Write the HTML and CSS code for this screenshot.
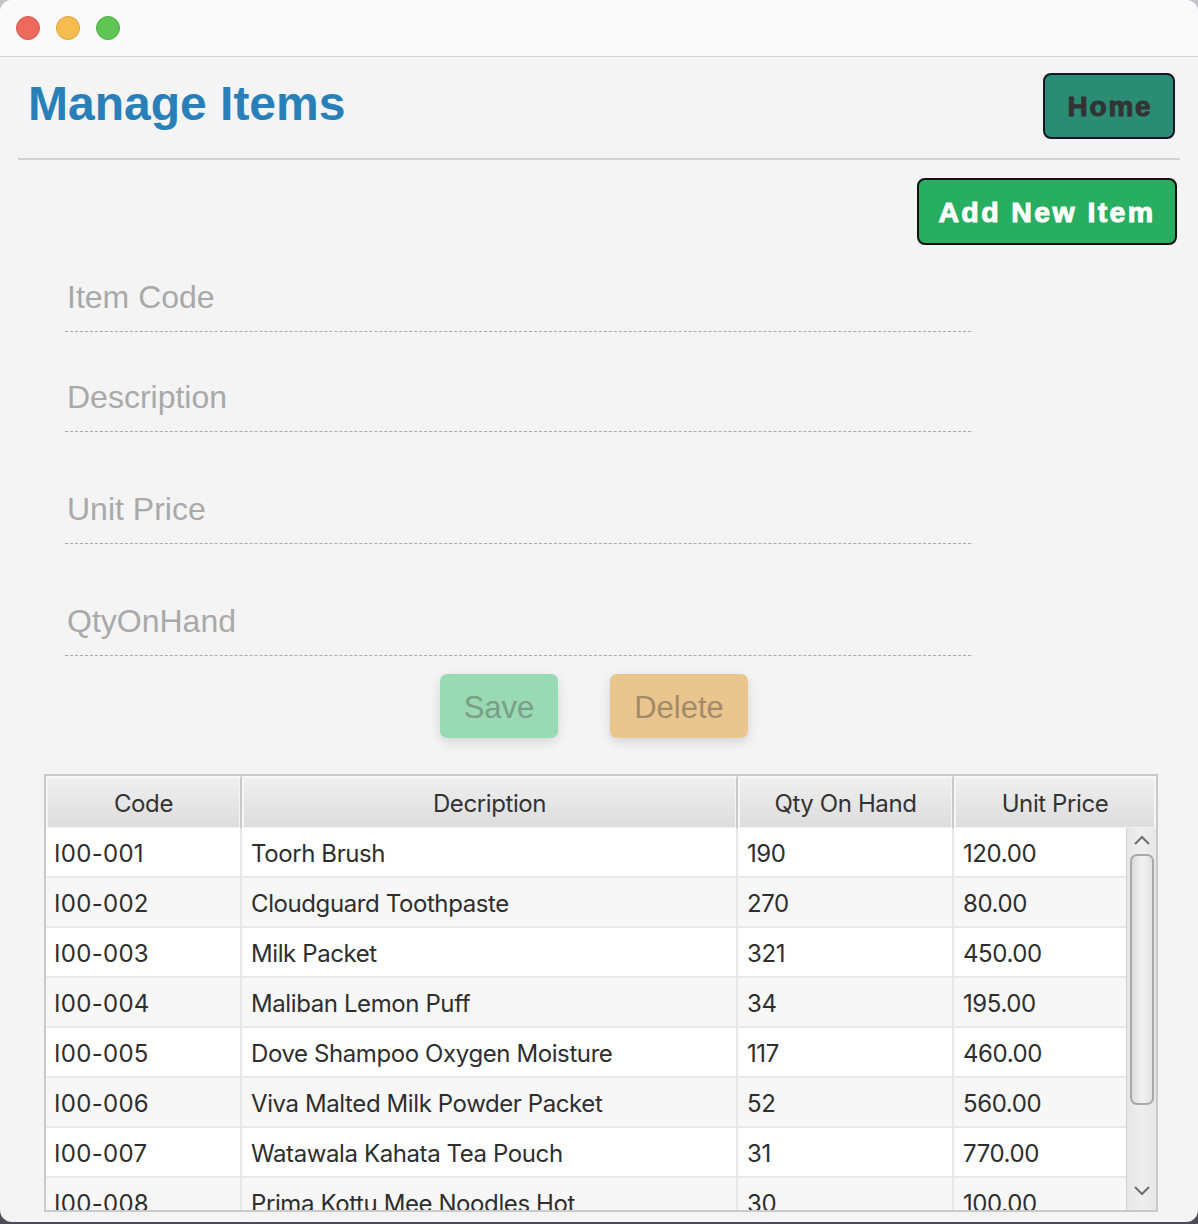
FILE: index.html
```html
<!DOCTYPE html>
<html>
<head>
<meta charset="utf-8">
<link rel="stylesheet" href="styles.css">
</head>
<body>
<div class="window">
  <div class="titlebar">
    <span class="light red"></span>
    <span class="light yellow"></span>
    <span class="light green"></span>
  </div>
  <div class="header">
    <h1 class="title">Manage Items</h1>
    <button class="btn-home">Home</button>
  </div>
  <div class="separator"></div>
  <div class="add-row">
    <button class="btn-add">Add New Item</button>
  </div>
  <div class="form">
    <div class="field f1">Item Code</div>
    <div class="field f2">Description</div>
    <div class="field f3">Unit Price</div>
    <div class="field f4">QtyOnHand</div>
  </div>
  <div class="actions">
    <button class="btn-save">Save</button>
    <button class="btn-delete">Delete</button>
  </div>
  <div class="table">
    <div class="thead">
      <div class="th">Code</div>
      <div class="th">Decription</div>
      <div class="th">Qty On Hand</div>
      <div class="th">Unit Price</div>
    </div>
    <div class="tbody">
      <div class="rows">
        <div class="tr"><div class="td">I00-001</div><div class="td">Toorh Brush</div><div class="td">190</div><div class="td">120.00</div></div>
        <div class="tr"><div class="td">I00-002</div><div class="td">Cloudguard Toothpaste</div><div class="td">270</div><div class="td">80.00</div></div>
        <div class="tr"><div class="td">I00-003</div><div class="td">Milk Packet</div><div class="td">321</div><div class="td">450.00</div></div>
        <div class="tr"><div class="td">I00-004</div><div class="td">Maliban Lemon Puff</div><div class="td">34</div><div class="td">195.00</div></div>
        <div class="tr"><div class="td">I00-005</div><div class="td">Dove Shampoo Oxygen Moisture</div><div class="td">117</div><div class="td">460.00</div></div>
        <div class="tr"><div class="td">I00-006</div><div class="td">Viva Malted Milk Powder Packet</div><div class="td">52</div><div class="td">560.00</div></div>
        <div class="tr"><div class="td">I00-007</div><div class="td">Watawala Kahata Tea Pouch</div><div class="td">31</div><div class="td">770.00</div></div>
        <div class="tr"><div class="td">I00-008</div><div class="td">Prima Kottu Mee Noodles Hot</div><div class="td">30</div><div class="td">100.00</div></div>
      </div>
      <div class="vscroll">
        <svg class="arrow" width="20" height="12" viewBox="0 0 20 12"><path d="M3 10 L10 3 L17 10" fill="none" stroke="#6f6f6f" stroke-width="2"/></svg>
        <div class="thumb"></div>
        <div class="track-gap"></div>
        <svg class="arrow" width="20" height="12" viewBox="0 0 20 12"><path d="M3 2 L10 9 L17 2" fill="none" stroke="#6f6f6f" stroke-width="2"/></svg>
      </div>
    </div>
  </div>
</div>
</body>
</html>
```

FILE: styles.css
```css
* { box-sizing: border-box; }
html, body { margin: 0; padding: 0; }
body {
  width: 1198px;
  height: 1224px;
  background: linear-gradient(#c4c4c8, #4e4a56);
  overflow: hidden;
}
.window {
  width: 1198px;
  height: 1222px;
  background: #f4f4f4;
  border-radius: 12px;
  overflow: hidden;
  display: flex;
  flex-direction: column;
  font-family: "Liberation Sans", Arial, sans-serif;
}
.titlebar {
  height: 57px;
  flex: none;
  background: #fafafa;
  border-bottom: 1px solid #d3d3d3;
  display: flex;
  align-items: center;
  padding-left: 16px;
  gap: 16px;
}
.light {
  width: 24px;
  height: 24px;
  border-radius: 50%;
  display: block;
}
.red { background: #ee6a5f; border: 1px solid #d8574d; }
.yellow { background: #f5bd4f; border: 1px solid #dca23a; }
.green { background: #61c554; border: 1px solid #4caf40; }

.header {
  display: flex;
  justify-content: space-between;
  align-items: flex-start;
  padding: 16px 23px 19px 28px;
  flex: none;
}
.title {
  margin: 3px 0 0 0;
  font-size: 48px;
  line-height: 56px;
  font-weight: bold;
  color: #2980b9;
}
.btn-home {
  width: 132px;
  height: 66px;
  background: #2a8c73;
  border: 2px solid #15152a;
  border-radius: 8px;
  font-family: "Liberation Sans", Arial, sans-serif;
  font-weight: bold;
  font-size: 28px;
  letter-spacing: 1.8px;
  -webkit-text-stroke: 1px #333;
  color: #333;
  padding: 2px 0 0 2px;
}
.separator {
  height: 2px;
  margin: 0 18px;
  background: #d2d2d2;
  flex: none;
}
.add-row {
  display: flex;
  justify-content: flex-end;
  padding: 18px 21px 0 0;
  flex: none;
}
.btn-add {
  width: 260px;
  height: 67px;
  background: #27ae60;
  border: 2px solid #111;
  border-radius: 8px;
  font-family: "Liberation Sans", Arial, sans-serif;
  font-weight: bold;
  font-size: 28.5px;
  letter-spacing: 2.4px;
  -webkit-text-stroke: 1px #fff;
  color: #fff;
  padding: 2px 0 0 0;
}
.form {
  display: flex;
  flex-direction: column;
  padding-left: 65px;
  flex: none;
}
.field {
  width: 906px;
  font-size: 32px;
  line-height: 36px;
  color: #a9a9a9;
  padding: 0 0 16px 2px;
  border-bottom: 1px dashed #a9a9a9;
}
.f1 { margin-top: 34px; }
.f2 { margin-top: 47px; }
.f3 { margin-top: 59px; }
.f4 { margin-top: 59px; }

.actions {
  display: flex;
  gap: 52px;
  padding: 18px 0 0 440px;
  flex: none;
}
.actions button {
  height: 64px;
  border: none;
  border-radius: 7px;
  font-family: "Liberation Sans", Arial, sans-serif;
  font-size: 31px;
  padding: 4px 0 0 0;
  box-shadow: 0 4px 12px rgba(0,0,0,0.13);
}
.btn-save {
  width: 118px;
  background: #99d9b4;
  color: #79a087;
}
.btn-delete {
  width: 138px;
  background: #eac68f;
  color: #a28b6a;
}

.table {
  margin: 36px 0 0 44px;
  width: 1114px;
  height: 438px;
  border: 2px solid #c9c9c9;
  background: #fff;
  display: flex;
  flex-direction: column;
  flex: none;
  font-family: Inter, "Open Sans", sans-serif;
  font-size: 24px;
  color: #2e2e2e;
}
.thead {
  display: grid;
  grid-template-columns: 196px 496px 216px 1fr;
  height: 52px;
  border-bottom: 2px solid #c9c9c9;
  background: #c9c9c9;
  flex: none;
}
.th {
  background: linear-gradient(#f0f0f0, #dcdcdc);
  border: 1px solid #f7f7f7;
  border-right: 2px solid #c9c9c9;
  box-shadow: inset 0 0 0 1px #f4f4f4;
  text-align: center;
  line-height: 48px;
  padding-top: 3px;
  letter-spacing: -0.4px;
  color: #333;
}
.th:last-child { border-right: 1px solid #f7f7f7; }
.tbody {
  display: flex;
  flex: 1;
  overflow: hidden;
}
.rows {
  flex: 1;
  overflow: hidden;
}
.tr {
  display: grid;
  grid-template-columns: 196px 496px 216px 1fr;
  height: 50px;
  border-bottom: 2px solid #e9e9e9;
  background: #fff;
}
.tr:nth-child(even) { background: #f7f7f7; }
.td {
  line-height: 48px;
  padding: 2px 0 0 8px;
  border-right: 2px solid #e8e8e8;
  white-space: nowrap;
  letter-spacing: -0.4px;
}
.td:first-child { letter-spacing: 0.3px; }
.td:nth-child(n+2) { padding-left: 9px; }
.td:last-child { border-right: none; }
.vscroll {
  width: 30px;
  flex: none;
  background: linear-gradient(90deg, #e6e6e6, #efefef 50%, #e6e6e6);
  border-left: 1px solid #d2d2d2;
  display: flex;
  flex-direction: column;
  align-items: center;
  padding-top: 6px;
}
.arrow { display: block; flex: none; }
.thumb {
  margin-top: 8px;
  width: 24px;
  height: 251px;
  border: 2px solid #a9a9a9;
  border-radius: 7px;
  background: linear-gradient(90deg, #dcdcdc, #f2f2f2 50%, #e2e2e2);
  flex: none;
}
.track-gap { height: 80px; flex: none; }
```
